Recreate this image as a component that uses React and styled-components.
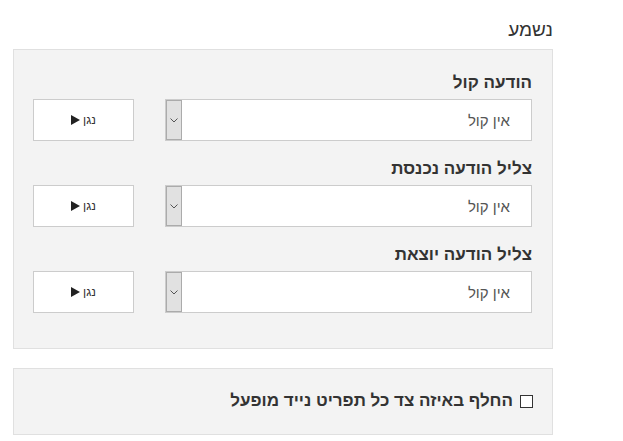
import React from 'react';
import styled, { createGlobalStyle } from 'styled-components';

const Global = createGlobalStyle`
  body {
    margin: 0;
    background: #fff;
    font-family: 'Liberation Sans', 'DejaVu Sans', sans-serif;
    color: #333;
  }
`;

const Page = styled.div`
  direction: rtl;
  width: 540px;
  margin-left: 13px;
  padding-top: 17px;
`;

const Title = styled.div`
  font-size: 19px;
  line-height: 26px;
  color: #333;
  margin-bottom: 6px;
`;

const Panel = styled.div`
  background: #f3f3f3;
  border: 1px solid #e0e0e0;
  padding: ${p => p.$pad};
  margin-bottom: ${p => p.$mb || 0}px;
`;

const Row = styled.div`
  margin-bottom: ${p => (p.$last ? 0 : 18)}px;
`;

const Label = styled.div`
  font-size: 17px;
  font-weight: bold;
  line-height: 20px;
  margin-bottom: 6px;
`;

const Controls = styled.div`
  display: flex;
  justify-content: space-between;
`;

const Select = styled.div`
  width: 367px;
  height: 42px;
  box-sizing: border-box;
  border: 1px solid #ccc;
  background: #fff;
  display: flex;
  align-items: center;
`;

const Value = styled.div`
  flex: 1;
  padding-right: 21px;
  font-size: 15px;
  color: #555;
`;

const Arrow = styled.div`
  width: 16px;
  height: 100%;
  box-sizing: border-box;
  background: #e1e1e1;
  border: 1px solid #ababab;
  display: flex;
  align-items: center;
  justify-content: center;
`;

const PlayButton = styled.button`
  width: 101px;
  height: 42px;
  box-sizing: border-box;
  border: 1px solid #ccc;
  background: #fff;
  font-family: inherit;
  font-size: 12px;
  color: #333;
  direction: rtl;
  display: flex;
  align-items: center;
  justify-content: center;
  gap: 3px;
  padding: 0;
`;

const Check = styled.label`
  display: flex;
  align-items: center;
  gap: 7px;
  font-size: 17px;
  font-weight: bold;
  padding-right: 6px;
`;

const Box = styled.span`
  width: 11px;
  height: 11px;
  border: 1px solid #333;
  background: #fff;
`;

const sounds = ['הודעה קול', 'צליל הודעה נכנסת', 'צליל הודעה יוצאת'];

export default function App() {
  return (
    <>
      <Global />
      <Page>
        <Title>נשמע</Title>
        <Panel $pad="23px 20px 35px 19px" $mb={19}>
          {sounds.map((s, i) => (
            <Row key={s} $last={i === sounds.length - 1}>
              <Label>{s}</Label>
              <Controls>
                <Select>
                  <Value>אין קול</Value>
                  <Arrow>
                    <svg width="8" height="5" viewBox="0 0 8 5">
                      <path d="M0.5 0.5 L4 4 L7.5 0.5" fill="none" stroke="#555" strokeWidth="1" />
                    </svg>
                  </Arrow>
                </Select>
                <PlayButton>
                  <span>נגן</span>
                  <svg width="9" height="10" viewBox="0 0 9 10">
                    <path d="M0 0 L9 5 L0 10 Z" fill="#222" />
                  </svg>
                </PlayButton>
              </Controls>
            </Row>
          ))}
        </Panel>
        <Panel $pad="22px 13px 23px">
          <Check>
            <Box />
            <span>החלף באיזה צד כל תפריט נייד מופעל</span>
          </Check>
        </Panel>
      </Page>
    </>
  );
}
